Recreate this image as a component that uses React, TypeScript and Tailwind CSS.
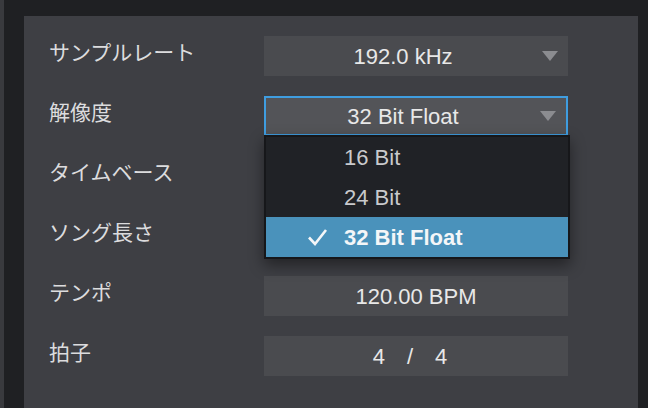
import React from 'react'

const jpFont = {
  fontFamily: '"Liberation Sans", "Noto Sans CJK JP", sans-serif',
}

type Row = {
  label: string
  value: string
  select?: boolean
  focused?: boolean
}

// rows 3 and 4 sit under the open menu, so their values are left out
const rows: Row[] = [
  { label: 'サンプルレート', value: '192.0 kHz', select: true },
  { label: '解像度', value: '32 Bit Float', select: true, focused: true },
  { label: 'タイムベース', value: '', select: true },
  { label: 'ソング長さ', value: '' },
  { label: 'テンポ', value: '120.00 BPM' },
  { label: '拍子', value: '4 / 4' },
]

const options = ['16 Bit', '24 Bit', '32 Bit Float']

function Arrow() {
  return (
    <svg width="16" height="10" viewBox="0 0 16 10" className="mr-[10px] shrink-0">
      <path d="M0 0 H16 L8 10 Z" fill="#8b8c90" />
    </svg>
  )
}

function Dropdown({ selected }: { selected: string }) {
  return (
    <div className="absolute left-[-2px] top-[37px] z-10 w-[306px] border-2 border-[#16171a] bg-[#202226] shadow-[0_6px_14px_rgba(0,0,0,0.45)]">
      {options.map((opt) => {
        const active = opt === selected
        return (
          <div
            key={opt}
            className={
              active
                ? 'flex h-10 items-center bg-[#4a92bb] text-[22px] font-bold text-[#f4f6f8]'
                : 'flex h-10 items-center text-[22px] text-[#c9cacc]'
            }
          >
            <div className="flex w-[78px] justify-end pr-[16px]">
              {active && (
                <svg width="21" height="18" viewBox="0 0 21 18">
                  <path
                    d="M2 9.5 L8 16 L19 2"
                    fill="none"
                    stroke="#f4f6f8"
                    strokeWidth="2.6"
                  />
                </svg>
              )}
            </div>
            <span>{opt}</span>
          </div>
        )
      })}
    </div>
  )
}

function Field({ row }: { row: Row }) {
  if (row.select) {
    return (
      <div
        className={
          row.focused
            ? 'relative flex h-10 w-[304px] items-center border-2 border-[#3f9de0] bg-[#535458]'
            : 'relative flex h-10 w-[304px] items-center bg-[#4a4b4f]'
        }
      >
        <div className="flex-1 text-center text-[22px] text-[#e8e8e8]">
          {row.value}
        </div>
        <Arrow />
        {row.focused && <Dropdown selected={row.value} />}
      </div>
    )
  }

  if (row.value === '4 / 4') {
    return (
      <div className="flex h-10 w-[304px] items-center justify-center gap-[22px] bg-[#4a4b4f] pr-3 text-[22px] text-[#e8e8e8]">
        <span>4</span>
        <span>/</span>
        <span>4</span>
      </div>
    )
  }

  return (
    <div className="flex h-10 w-[304px] items-center justify-center bg-[#4a4b4f] text-[22px] text-[#e8e8e8]">
      {row.value}
    </div>
  )
}

export default function App() {
  return (
    <div className="flex h-[408px] w-[648px] overflow-hidden bg-[#1f2023]" style={jpFont}>
      <div className="w-1 bg-[#393a3e]" />
      <div className="ml-5 mt-4 mr-[10px] flex flex-1 flex-col gap-5 bg-[#3e3f44] pl-[25px] pt-5">
        {rows.map((row) => (
          <div key={row.label} className="flex h-10 items-center">
            <div className="w-[215px] pb-[6px] text-[21px] text-[#dcdcde]">
              {row.label}
            </div>
            <Field row={row} />
          </div>
        ))}
      </div>
    </div>
  )
}
